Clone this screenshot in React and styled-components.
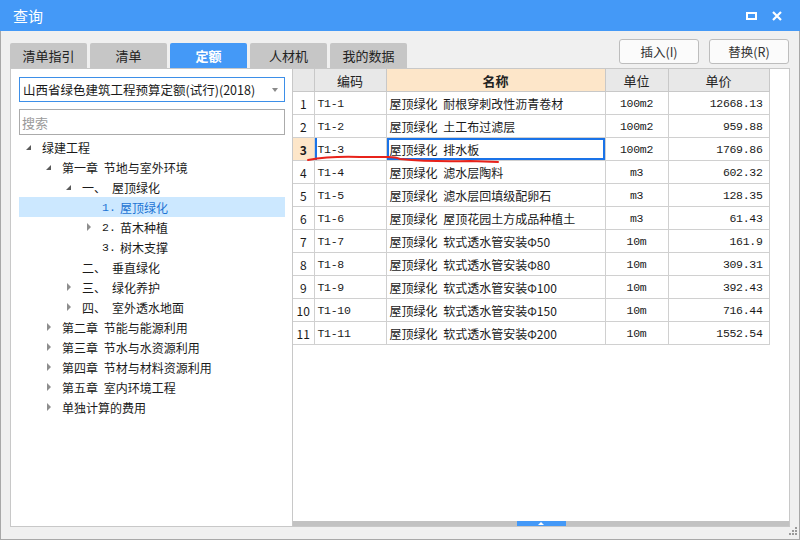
import React from "react";
import styled, { createGlobalStyle } from "styled-components";

const GlobalStyle = createGlobalStyle`
	html, body {
		margin: 0;
		padding: 0;
		background: #ffffff;
	}
	body {
		font-family: "Noto Sans CJK SC", "Liberation Sans", sans-serif;
		font-size: 12px;
		color: #1a1a1a;
	}
`;

const CJK = `"Noto Sans CJK SC", "Liberation Sans", sans-serif`;
const MONO = `"Liberation Mono", "Noto Sans CJK SC", monospace`;

const Window = styled.div`
	position: relative;
	width: 800px;
	height: 540px;
	display: flex;
	flex-direction: column;
	background: #f0f0f0;
	overflow: hidden;
`;

const TitleBar = styled.div`
	height: 31px;
	flex: none;
	background: #4499f7;
	display: flex;
	align-items: center;
	padding: 0 10px 0 13px;
	color: #ffffff;
	font-family: ${CJK};
	font-size: 15px;
`;

const Title = styled.div`
	flex: 1;
	line-height: 31px;
`;

const TitleButton = styled.div`
	width: 26px;
	height: 20px;
	display: flex;
	align-items: center;
	justify-content: center;
`;

const Body = styled.div`
	flex: 1;
	display: flex;
	flex-direction: column;
	border: 1px solid #a8a8a8;
	border-top: none;
	padding: 0 9px 12px 9px;
	min-height: 0;
`;

const TopRow = styled.div`
	height: 37px;
	flex: none;
	display: flex;
	justify-content: space-between;
`;

const Tabs = styled.div`
	display: flex;
	align-items: flex-end;
	gap: 3px;
`;

const Tab = styled.div`
	width: 77px;
	height: 25px;
	display: flex;
	align-items: center;
	justify-content: center;
	border-radius: 2px 2px 0 0;
	background: ${(p) => (p.$active ? "#4499f7" : "#c6c6c6")};
	color: ${(p) => (p.$active ? "#ffffff" : "#222222")};
	font-weight: ${(p) => (p.$active ? "bold" : "normal")};
	font-size: 13px;
`;

const Actions = styled.div`
	display: flex;
	gap: 10px;
	padding-top: 8px;
	padding-right: 1px;
`;

const ActionButton = styled.div`
	width: 78px;
	height: 23px;
	border: 1px solid #bdbdbd;
	border-radius: 3px;
	background: #fbfbfb;
	display: flex;
	align-items: center;
	justify-content: center;
	font-size: 12.5px;
	color: #333333;
`;

const Panels = styled.div`
	flex: 1;
	display: flex;
	min-height: 0;
`;

const LeftPanel = styled.div`
	width: 283px;
	flex: none;
	background: #ffffff;
	border: 1px solid #c8c8c8;
	display: flex;
	flex-direction: column;
	padding: 8px 7px 0 8px;
	box-sizing: border-box;
`;

const Select = styled.div`
	height: 25px;
	box-sizing: border-box;
	border: 1px solid #3d8fe8;
	display: flex;
	align-items: center;
	padding: 0 6px 0 3px;
	font-size: 12.5px;
	white-space: nowrap;
`;

const SelectText = styled.span`
	flex: 1;
`;

const Caret = styled.span`
	width: 0;
	height: 0;
	border-left: 3px solid transparent;
	border-right: 3px solid transparent;
	border-top: 4px solid #8a8a8a;
`;

const Search = styled.div`
	height: 26px;
	box-sizing: border-box;
	margin-top: 7px;
	border: 1px solid #ababab;
	display: flex;
	align-items: center;
	padding-left: 2px;
	color: #9a9a9a;
	font-size: 13px;
`;

const Tree = styled.div`
	margin-top: 2px;
	display: flex;
	flex-direction: column;
`;

const TreeRow = styled.div`
	height: 20px;
	display: flex;
	align-items: center;
	padding-left: ${(p) => 7 + p.$level * 20}px;
	background: ${(p) => (p.$selected ? "#cce8ff" : "transparent")};
	color: ${(p) => (p.$selected ? "#1c74d4" : "#1a1a1a")};
	font-size: 12px;
	white-space: pre;
	word-spacing: 3px;
`;

const Toggle = styled.span`
	width: 16px;
	height: 20px;
	flex: none;
	position: relative;
	&::before {
		content: "";
		position: absolute;
		left: 0;
		${(p) =>
			p.$state === "open"
				? `top: 8px; border-bottom: 5px solid #5a5a5a; border-left: 5px solid transparent;`
				: p.$state === "closed"
				? `top: 6px; left: 1px; border-left: 4px solid #8e8e8e; border-top: 4px solid transparent; border-bottom: 4px solid transparent;`
				: ``}
	}
`;

const Num = styled.span`
	display: inline-block;
	width: ${(p) => p.$w}px;
	font-family: ${(p) => (p.$mono ? MONO : CJK)};
	font-size: ${(p) => (p.$mono ? "11.5px" : "12px")};
`;

const RightPanel = styled.div`
	flex: 1;
	background: #ffffff;
	border: 1px solid #c8c8c8;
	border-left: none;
	display: flex;
	flex-direction: column;
	min-width: 0;
`;

const Grid = styled.table`
	border-collapse: collapse;
	table-layout: fixed;
	width: 476px;
	font-size: 12px;
`;

const HeadCell = styled.th`
	height: 22px;
	padding: 0;
	border: 1px solid #c8c8c8;
	border-top: none;
	background: ${(p) => (p.$accent ? "#fde6c9" : "#e8e8e8")};
	font-weight: ${(p) => (p.$accent ? "bold" : "normal")};
	font-size: 13px;
	color: #222222;
	&:first-child {
		border-left: none;
	}
`;

const Cell = styled.td`
	height: 22px;
	padding: 0 ${(p) => (p.$align === "right" ? "6px" : "3px")} 0 3px;
	border: 1px solid #d0d0d0;
	text-align: ${(p) => p.$align || "left"};
	font-family: ${(p) => (p.$mono ? MONO : CJK)};
	font-size: ${(p) => (p.$mono ? "11.5px" : "12px")};
	letter-spacing: ${(p) => (p.$mono ? "-0.3px" : "0")};
	word-spacing: 3px;
	white-space: nowrap;
	overflow: hidden;
	background: ${(p) => (p.$current ? "#fde6c9" : "#ffffff")};
	font-weight: ${(p) => (p.$current ? "bold" : "normal")};
	box-shadow: ${(p) =>
		p.$selected ? "inset 0 0 0 2px #1a73e8" : p.$rowMark ? "inset 2px 0 0 #1a73e8" : "none"};
	&:first-child {
		border-left: none;
	}
`;

const Filler = styled.div`
	flex: 1;
`;

const HScroll = styled.div`
	height: 5px;
	background: #c2c2c2;
	display: flex;
	justify-content: center;
`;

const HThumb = styled.div`
	width: 49px;
	height: 5px;
	background: #4499f7;
	display: flex;
	align-items: center;
	justify-content: center;
	&::after {
		content: "";
		border-left: 3px solid transparent;
		border-right: 3px solid transparent;
		border-bottom: 3px solid #ffffff;
	}
`;

const Grip = styled.svg`
	position: absolute;
	right: 2px;
	bottom: 4px;
`;

const Annotation = styled.svg`
	position: absolute;
	left: 0;
	top: 0;
	pointer-events: none;
`;

const tree = [
	{ level: 0, state: "open", text: "绿建工程" },
	{ level: 1, state: "open", text: "第一章 节地与室外环境" },
	{ level: 2, state: "open", num: "一、", w: 30, text: "屋顶绿化" },
	{ level: 3, num: "1.", w: 18, mono: true, text: "屋顶绿化", selected: true },
	{ level: 3, state: "closed", num: "2.", w: 18, mono: true, text: "苗木种植" },
	{ level: 3, num: "3.", w: 18, mono: true, text: "树木支撑" },
	{ level: 2, num: "二、", w: 30, text: "垂直绿化" },
	{ level: 2, state: "closed", num: "三、", w: 30, text: "绿化养护" },
	{ level: 2, state: "closed", num: "四、", w: 30, text: "室外透水地面" },
	{ level: 1, state: "closed", text: "第二章 节能与能源利用" },
	{ level: 1, state: "closed", text: "第三章 节水与水资源利用" },
	{ level: 1, state: "closed", text: "第四章 节材与材料资源利用" },
	{ level: 1, state: "closed", text: "第五章 室内环境工程" },
	{ level: 1, state: "closed", text: "单独计算的费用" },
];

const rows = [
	["T1-1", "屋顶绿化 耐根穿刺改性沥青卷材", "100m2", "12668.13"],
	["T1-2", "屋顶绿化 土工布过滤层", "100m2", "959.88"],
	["T1-3", "屋顶绿化 排水板", "100m2", "1769.86"],
	["T1-4", "屋顶绿化 滤水层陶料", "m3", "602.32"],
	["T1-5", "屋顶绿化 滤水层回填级配卵石", "m3", "128.35"],
	["T1-6", "屋顶绿化 屋顶花园土方成品种植土", "m3", "61.43"],
	["T1-7", "屋顶绿化 软式透水管安装Φ50", "10m", "161.9"],
	["T1-8", "屋顶绿化 软式透水管安装Φ80", "10m", "309.31"],
	["T1-9", "屋顶绿化 软式透水管安装Φ100", "10m", "392.43"],
	["T1-10", "屋顶绿化 软式透水管安装Φ150", "10m", "716.44"],
	["T1-11", "屋顶绿化 软式透水管安装Φ200", "10m", "1552.54"],
];

const tabs = ["清单指引", "清单", "定额", "人材机", "我的数据"];

export default function App() {
	return (
		<Window>
			<GlobalStyle />
			<TitleBar>
				<Title>查询</Title>
				<TitleButton>
					<svg width="11" height="8" viewBox="0 0 11 8">
						<rect x="1" y="1" width="9" height="6" fill="none" stroke="#fff" strokeWidth="2" />
					</svg>
				</TitleButton>
				<TitleButton>
					<svg width="10" height="10" viewBox="0 0 10 10">
						<path d="M1 1 L9 9 M9 1 L1 9" stroke="#fff" strokeWidth="2.2" />
					</svg>
				</TitleButton>
			</TitleBar>
			<Body>
				<TopRow>
					<Tabs>
						{tabs.map((t) => (
							<Tab key={t} $active={t === "定额"}>{t}</Tab>
						))}
					</Tabs>
					<Actions>
						<ActionButton>插入(I)</ActionButton>
						<ActionButton>替换(R)</ActionButton>
					</Actions>
				</TopRow>
				<Panels>
					<LeftPanel>
						<Select>
							<SelectText>山西省绿色建筑工程预算定额(试行)(2018)</SelectText>
							<Caret />
						</Select>
						<Search>搜索</Search>
						<Tree>
							{tree.map((n, i) => (
								<TreeRow key={i} $level={n.level} $selected={n.selected}>
									<Toggle $state={n.state} />
									{n.num && <Num $w={n.w} $mono={n.mono}>{n.num}</Num>}
									{n.text}
								</TreeRow>
							))}
						</Tree>
					</LeftPanel>
					<RightPanel>
						<Grid>
							<colgroup>
								<col style={{ width: 21 }} />
								<col style={{ width: 72 }} />
								<col style={{ width: 219 }} />
								<col style={{ width: 63 }} />
								<col style={{ width: 101 }} />
							</colgroup>
							<thead>
								<tr>
									<HeadCell />
									<HeadCell>编码</HeadCell>
									<HeadCell $accent>名称</HeadCell>
									<HeadCell>单位</HeadCell>
									<HeadCell>单价</HeadCell>
								</tr>
							</thead>
							<tbody>
								{rows.map((r, i) => {
									const cur = i === 2;
									return (
										<tr key={r[0]}>
											<Cell $align="center" $current={cur}>{i + 1}</Cell>
											<Cell $mono $rowMark={cur}>{r[0]}</Cell>
											<Cell $selected={cur}>{r[1]}</Cell>
											<Cell $mono $align="center">{r[2]}</Cell>
											<Cell $mono $align="right">{r[3]}</Cell>
										</tr>
									);
								})}
							</tbody>
						</Grid>
						<Filler />
						<HScroll>
							<HThumb />
						</HScroll>
					</RightPanel>
				</Panels>
			</Body>
			<Grip width="9" height="9" viewBox="0 0 9 9">
				<rect x="6" y="0" width="2" height="2" fill="#9a9a9a" />
				<rect x="3" y="3" width="2" height="2" fill="#9a9a9a" />
				<rect x="6" y="3" width="2" height="2" fill="#9a9a9a" />
				<rect x="0" y="6" width="2" height="2" fill="#9a9a9a" />
				<rect x="3" y="6" width="2" height="2" fill="#9a9a9a" />
				<rect x="6" y="6" width="2" height="2" fill="#9a9a9a" />
			</Grip>
			<Annotation width="800" height="540">
				<path
					d="M308 160 Q330 156 360 157 L388 157 Q396 157 400 159 Q430 162 470 161 L498 162"
					fill="none"
					stroke="#e8231b"
					strokeWidth="2"
					strokeLinecap="round"
				/>
			</Annotation>
		</Window>
	);
}
